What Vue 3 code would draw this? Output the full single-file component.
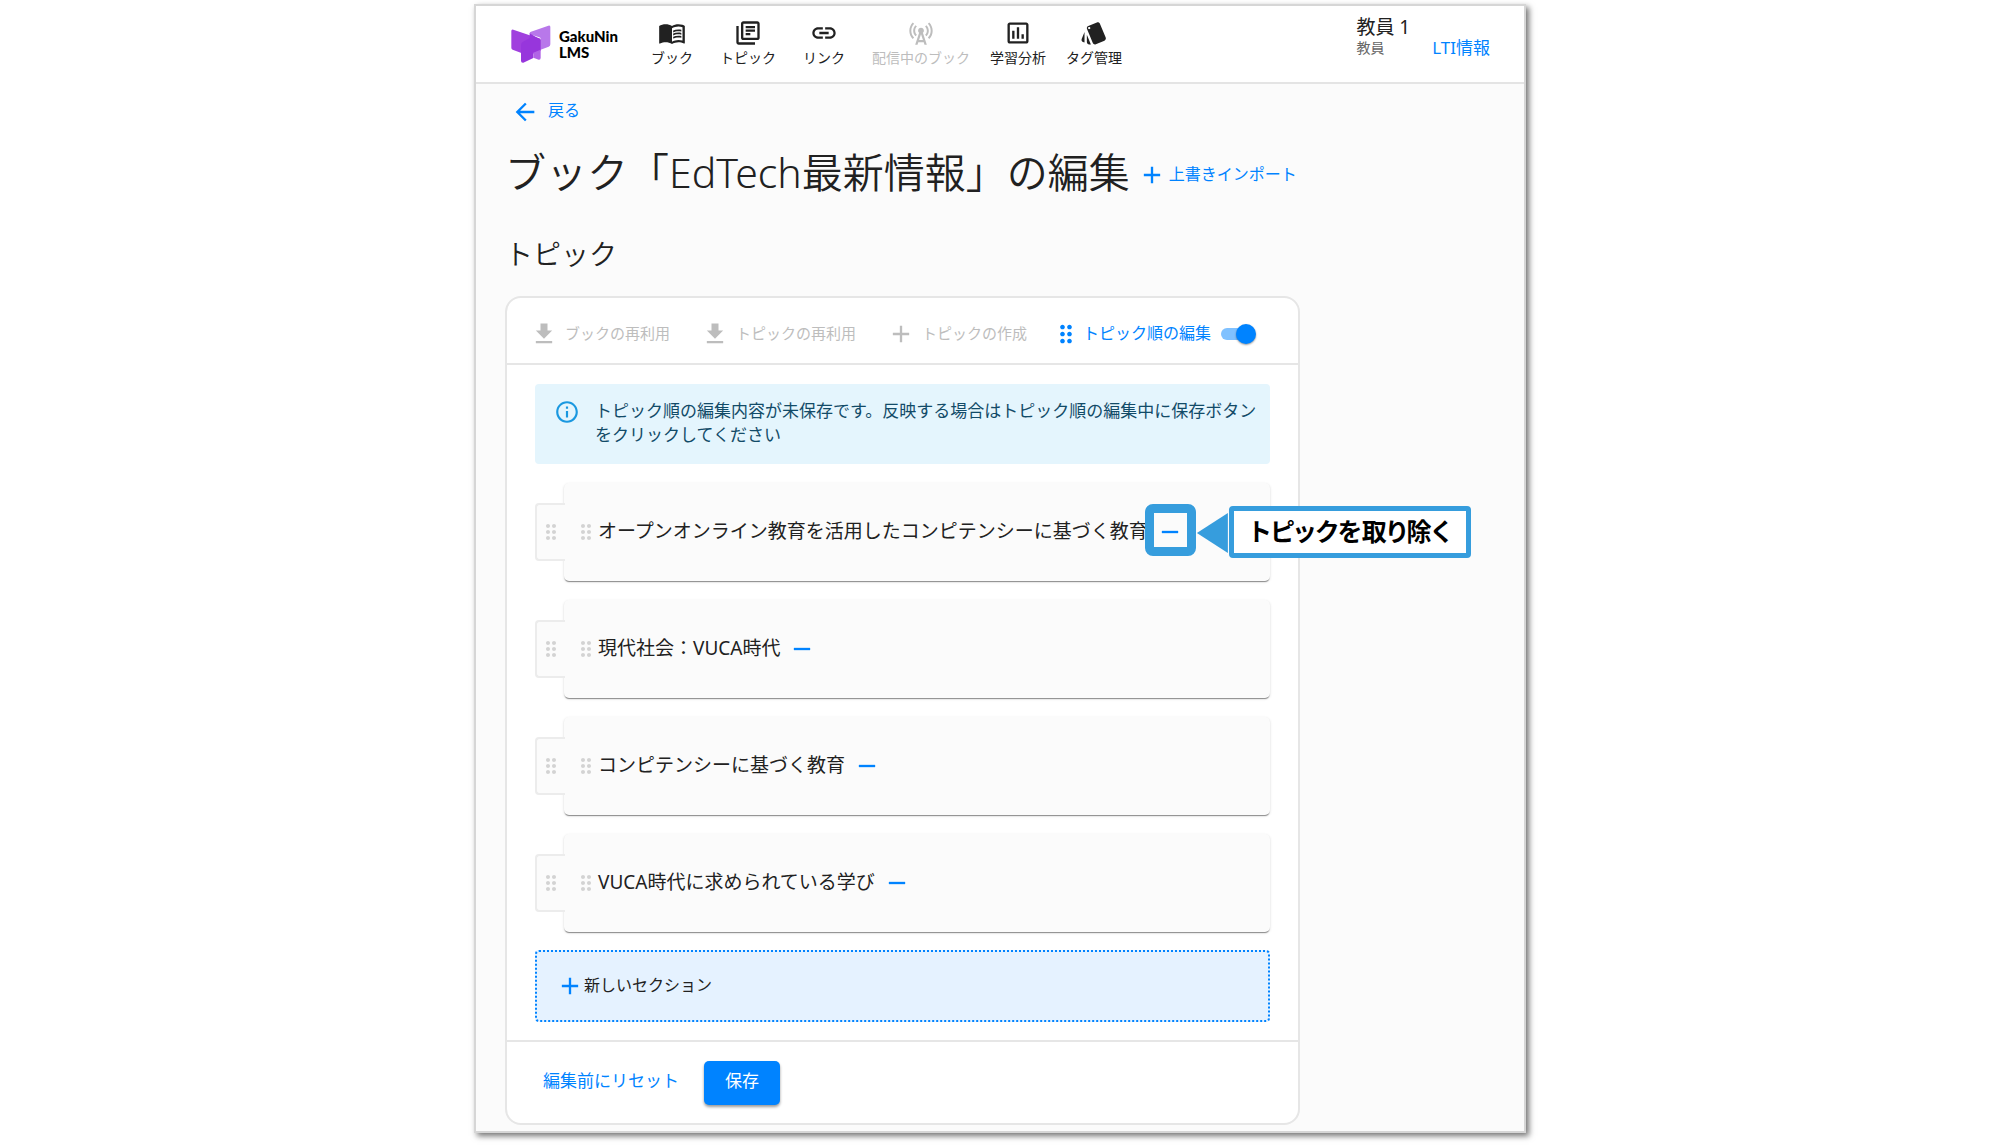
<script setup>
import { ref } from 'vue'

const icons = {
  book: 'M21 5c-1.11-.35-2.33-.5-3.5-.5-1.95 0-4.05.4-5.5 1.5-1.45-1.1-3.55-1.5-5.5-1.5S2.45 4.9 1 6v14.65c0 .25.25.5.5.5.1 0 .15-.05.25-.05C3.1 20.45 5.05 20 6.5 20c1.95 0 4.05.4 5.5 1.5 1.35-.85 3.8-1.5 5.5-1.5 1.65 0 3.35.3 4.75 1.05.1.05.15.05.25.05.25 0 .5-.25.5-.5V6c-.6-.45-1.25-.75-2-1zm0 13.5c-1.1-.35-2.3-.5-3.5-.5-1.7 0-4.15.65-5.5 1.5V8c1.35-.85 3.8-1.5 5.5-1.5 1.2 0 2.4.15 3.5.5v11.5zM17.5 10.5c.88 0 1.73.09 2.5.26V9.24c-.79-.15-1.64-.24-2.5-.24-1.7 0-3.24.29-4.5.83v1.66c1.13-.64 2.7-.99 4.5-.99zM13 12.49v1.66c1.13-.64 2.7-.99 4.5-.99.88 0 1.73.09 2.5.26V11.9c-.79-.15-1.64-.24-2.5-.24-1.7 0-3.24.3-4.5.83zM17.5 14.33c-1.7 0-3.24.29-4.5.83v1.66c1.13-.64 2.7-.99 4.5-.99.88 0 1.73.09 2.5.26v-1.52c-.79-.16-1.64-.24-2.5-.24z',
  topic: 'M4 6H2v14c0 1.1.9 2 2 2h14v-2H4V6zm16-4H8c-1.1 0-2 .9-2 2v12c0 1.1.9 2 2 2h12c1.1 0 2-.9 2-2V4c0-1.1-.9-2-2-2zm0 14H8V4h12v12zM10 9h8v2h-8zm0 3h4v2h-4zm0-6h8v2h-8z',
  link: 'M3.9 12c0-1.71 1.39-3.1 3.1-3.1h4V7H7c-2.76 0-5 2.24-5 5s2.24 5 5 5h4v-1.9H7c-1.71 0-3.1-1.39-3.1-3.1zM8 13h8v-2H8v2zm9-6h-4v1.9h4c1.71 0 3.1 1.39 3.1 3.1s-1.39 3.1-3.1 3.1h-4V17h4c2.76 0 5-2.24 5-5s-2.24-5-5-5z',
  tower: 'M7.3 14.7l1.2-1.2c-1-1-1.5-2.3-1.5-3.5 0-1.3.5-2.6 1.5-3.5L7.3 5.3c-1.3 1.3-2 3-2 4.7s.7 3.4 2 4.7zM19.1 2.9l-1.2 1.2c1.6 1.6 2.4 3.8 2.4 5.9 0 2.1-.8 4.3-2.4 5.9l1.2 1.2c2-2 2.9-4.5 2.9-7.1 0-2.6-1-5.1-2.9-7.1zM6.1 4.1L4.9 2.9C3 4.9 2 7.4 2 10c0 2.6 1 5.1 2.9 7.1l1.2-1.2c-1.6-1.6-2.4-3.8-2.4-5.9 0-2.1.8-4.3 2.4-5.9zM16.7 14.7c1.3-1.3 2-3 2-4.7-.1-1.7-.7-3.4-2-4.7l-1.2 1.2c1 1 1.5 2.3 1.5 3.5 0 1.3-.5 2.6-1.5 3.5l1.2 1.2zM14.5 10c0-1.38-1.12-2.5-2.5-2.5S9.5 8.62 9.5 10c0 .76.34 1.42.87 1.88L7 22h2l.67-2h4.67l.66 2h2l-3.37-10.12c.53-.46.87-1.12.87-1.88zm-4.17 8L12 13l1.67 5h-3.34z',
  chart: 'M9 17H7v-7h2v7zm4 0h-2V7h2v10zm4 0h-2v-4h2v4zm2 2H5V5h14v14zm0-16H5c-1.1 0-2 .9-2 2v14c0 1.1.9 2 2 2h14c1.1 0 2-.9 2-2V5c0-1.1-.9-2-2-2z',
  tag: 'M2.53 19.65l1.34.56v-9.03l-2.43 5.86c-.41 1.02.08 2.19 1.09 2.61zm19.5-3.7L17.07 3.98c-.31-.75-1.04-1.21-1.81-1.23-.26 0-.53.04-.79.15L7.1 5.95c-.75.31-1.21 1.03-1.23 1.8-.01.27.04.54.15.8l4.96 11.97c.31.76 1.05 1.22 1.83 1.23.26 0 .52-.05.77-.15l7.36-3.05c1.02-.42 1.51-1.59 1.09-2.6zM7.88 8.75c-.55 0-1-.45-1-1s.45-1 1-1 1 .45 1 1-.45 1-1 1zm-2 11c0 1.1.9 2 2 2h1.45l-3.45-8.34v6.34z',
  back: 'M20 11H7.83l5.59-5.59L12 4l-8 8 8 8 1.41-1.41L7.83 13H20v-2z',
  download: 'M19 9h-4V3H9v6H5l7 7 7-7zM5 18v2h14v-2H5z',
  add: 'M19 13h-6v6h-2v-6H5v-2h6V5h2v6h6v2z',
  remove: 'M19 13H5v-2h14v2z',
  info: 'M11 7h2v2h-2zm0 4h2v6h-2zm1-9C6.48 2 2 6.48 2 12s4.48 10 10 10 10-4.48 10-10S17.52 2 12 2zm0 18c-4.41 0-8-3.59-8-8s3.59-8 8-8 8 3.59 8 8-3.59 8-8 8z',
  drag: 'M11 18c0 1.1-.9 2-2 2s-2-.9-2-2 .9-2 2-2 2 .9 2 2zm-2-8c-1.1 0-2 .9-2 2s.9 2 2 2 2-.9 2-2-.9-2-2-2zm0-6c-1.1 0-2 .9-2 2s.9 2 2 2 2-.9 2-2-.9-2-2-2zm6 4c1.1 0 2-.9 2-2s-.9-2-2-2-2 .9-2 2 .9 2 2 2zm0 2c-1.1 0-2 .9-2 2s.9 2 2 2 2-.9 2-2-.9-2-2-2zm0 6c-1.1 0-2 .9-2 2s.9 2 2 2 2-.9 2-2-.9-2-2-2z',
}

const nav = [
  { label: 'ブック', icon: 'book' },
  { label: 'トピック', icon: 'topic' },
  { label: 'リンク', icon: 'link' },
  { label: '配信中のブック', icon: 'tower', disabled: true },
  { label: '学習分析', icon: 'chart' },
  { label: 'タグ管理', icon: 'tag' },
]

const tools = [
  { label: 'ブックの再利用', icon: 'download' },
  { label: 'トピックの再利用', icon: 'download' },
  { label: 'トピックの作成', icon: 'add' },
]

const topics = [
  'オープンオンライン教育を活用したコンピテンシーに基づく教育',
  '現代社会：VUCA時代',
  'コンピテンシーに基づく教育',
  'VUCA時代に求められている学び',
]

const sorting = ref(true)
</script>

<template>
  <div class="window" lang="ja">
    <header class="appbar">
      <a class="brand" href="#">
        <svg class="brand-mark" viewBox="122 74 120 114" aria-hidden="true">
          <path d="M178 99q0-4 4-5l52-18q6-2 6 4v52q0 5-5 7l-24 9v-32q0-4-4-5l-29-9z" fill="#b878ea" />
          <path d="M129 88l49 17 29 9q4 1 4 5v32l-22 9-36 0v-2l-26-10q-4-2-4-6V92q0-6 6-4z" fill="#a040de" />
          <path d="M152 134q0-7 6-10l20-11v-14l33 19v30l-22 9v16l-30 14q-7 1-7-6z" fill="#9736dc" />
          <path d="M189 157l22-9v24q0 7-6 6l-16-6z" fill="#b163e6" />
        </svg>
        <span class="brand-name">GakuNin<br />LMS</span>
      </a>
      <nav class="nav">
        <button v-for="n in nav" :key="n.label" class="nav-item" :disabled="n.disabled">
          <svg class="icon" viewBox="0 0 24 24" aria-hidden="true"><path :d="icons[n.icon]" /></svg>
          <span>{{ n.label }}</span>
        </button>
      </nav>
      <div class="user">
        <div class="user-id">
          <span class="user-name">教員 1</span>
          <span class="user-role">教員</span>
        </div>
        <button class="lti">LTI情報</button>
      </div>
    </header>

    <main class="main">
      <a class="back" href="#">
        <svg class="icon" viewBox="0 0 24 24" aria-hidden="true"><path :d="icons.back" /></svg>
        <span class="label">戻る</span>
      </a>
      <div class="heading">
        <h1>ブック「EdTech最新情報」の編集</h1>
        <button class="import">
          <svg class="icon" viewBox="0 0 24 24" aria-hidden="true"><path :d="icons.add" /></svg>
          <span class="label">上書きインポート</span>
        </button>
      </div>
      <h2>トピック</h2>

      <section class="card">
        <div class="toolbar">
          <button v-for="t in tools" :key="t.label" class="tool" disabled>
            <svg class="icon" viewBox="0 0 24 24" aria-hidden="true"><path :d="icons[t.icon]" /></svg>
            <span class="label">{{ t.label }}</span>
          </button>
          <label class="sort">
            <svg class="icon" viewBox="0 0 24 24" aria-hidden="true"><path :d="icons.drag" /></svg>
            <span class="label">トピック順の編集</span>
            <input v-model="sorting" class="switch" type="checkbox" role="switch" />
          </label>
        </div>

        <div class="content">
          <div class="alert" role="alert">
            <svg class="alert-icon" viewBox="0 0 24 24" aria-hidden="true"><path :d="icons.info" /></svg>
            <p>トピック順の編集内容が未保存です。反映する場合はトピック順の編集中に保存ボタンをクリックしてください</p>
          </div>

          <ul class="sections">
            <li v-for="(topic, i) in topics" :key="topic" class="section">
              <button class="handle" aria-label="セクションを移動">
                <svg class="drag" viewBox="0 0 24 24" aria-hidden="true"><path :d="icons.drag" /></svg>
              </button>
              <div class="topic">
                <svg class="drag" viewBox="0 0 24 24" aria-hidden="true"><path :d="icons.drag" /></svg>
                <span class="topic-name">{{ topic }}</span>
                <div class="remove-slot">
                  <button class="remove" aria-label="トピックを取り除く">
                    <svg class="icon" viewBox="0 0 24 24" aria-hidden="true"><path :d="icons.remove" /></svg>
                  </button>
                  <div v-if="i === 0" class="guide">
                    <span class="guide-ring"></span>
                    <span class="guide-arrow"></span>
                    <strong class="guide-label">トピックを取り除く</strong>
                  </div>
                </div>
              </div>
            </li>
          </ul>

          <button class="new-section">
            <svg class="icon" viewBox="0 0 24 24" aria-hidden="true"><path :d="icons.add" /></svg>
            <span class="label">新しいセクション</span>
          </button>
        </div>

        <div class="actions">
          <button class="reset"><span class="label">編集前にリセット</span></button>
          <button class="save"><span class="label">保存</span></button>
        </div>
      </section>
    </main>
  </div>
</template>

<style>
body {
  background: #fff;
}
</style>

<style scoped>
.window {
  box-sizing: border-box;
  max-width: 1052px;
  margin: 4px auto 12px;
  border: 2px solid #d6d6d6;
  background: #fbfbfb;
  box-shadow: 3px 3px 6px rgba(0, 0, 0, 0.55);
  color: #212121;
  font-family: 'Noto Sans', 'Noto Sans CJK JP', sans-serif;
  font-size: 16px;
}

button {
  margin: 0;
  padding: 0;
  border: 0;
  background: none;
  color: inherit;
  font: inherit;
  cursor: pointer;
}

a {
  color: inherit;
  text-decoration: none;
}

.icon {
  flex: none;
  display: block;
  width: 28px;
  height: 28px;
  fill: currentColor;
}

.label {
  display: block;
  padding-bottom: 4px;
}

.appbar {
  display: flex;
  height: 76px;
  border-bottom: 2px solid #e4e4e4;
  background: #fff;
}

.brand {
  display: flex;
  align-items: center;
  gap: 8px;
  width: 123px;
  padding: 0 0 0 35px;
  color: #000;
}

.brand-mark {
  width: 40px;
  height: 38px;
}

.brand-name {
  font: 900 15px/16px Lato, sans-serif;
}

.nav {
  display: flex;
  align-items: flex-start;
  padding-top: 13px;
}

.nav-item {
  display: flex;
  flex-direction: column;
  align-items: center;
  min-width: 76px;
  padding: 0 10px;
  font-size: 14px;
  line-height: 22px;
}

.nav-item:disabled {
  color: #bdbdbd;
}

.user {
  display: flex;
  align-items: flex-start;
  gap: 22px;
  margin-left: auto;
  padding: 8px 34px 0 0;
}

.user-id {
  display: flex;
  flex-direction: column;
}

.user-name {
  font-size: 19px;
  line-height: 26px;
}

.user-role {
  color: #666;
  font-size: 14px;
  line-height: 16px;
}

.lti {
  margin-top: 22px;
  color: #0083ff;
  font-size: 17px;
  line-height: 24px;
}

.main {
  padding: 14px 29px 6px;
}

.back {
  display: flex;
  align-items: center;
  gap: 9px;
  width: max-content;
  padding-left: 6px;
  color: #0083ff;
  line-height: 24px;
}

.heading {
  display: flex;
  align-items: center;
  gap: 8px;
  margin-top: 18px;
}

h1 {
  margin: 0;
  font-size: 41px;
  font-weight: 350;
  line-height: 56px;
}

.import {
  display: flex;
  align-items: center;
  gap: 3px;
  padding-top: 6px;
  color: #0083ff;
}

h2 {
  margin: 34px 0 22px;
  font-size: 28px;
  font-weight: 350;
  line-height: 40px;
}

.card {
  box-sizing: border-box;
  max-width: 795px;
  border: 2px solid #e6e6e6;
  border-radius: 16px;
  background: #fff;
}

.toolbar {
  display: flex;
  align-items: center;
  height: 58px;
  padding: 7px 23px 0;
  border-bottom: 2px solid #e6e6e6;
}

.tool {
  display: flex;
  align-items: center;
  gap: 7px;
  margin-right: 31px;
  color: #bdbdbd;
  font-size: 15px;
}

.sort {
  display: flex;
  align-items: center;
  gap: 3px;
  margin-left: -6px;
  color: #0083ff;
}

.switch {
  appearance: none;
  position: relative;
  width: 36px;
  height: 20px;
  margin: 0 0 0 7px;
}

.switch::before {
  content: '';
  position: absolute;
  top: 4px;
  left: 0;
  width: 30px;
  height: 12px;
  border-radius: 6px;
  background: #9e9e9e;
}

.switch::after {
  content: '';
  position: absolute;
  top: 0;
  left: 0;
  width: 20px;
  height: 20px;
  border-radius: 50%;
  background: #fff;
  box-shadow: 0 1px 2px rgba(0, 0, 0, 0.4);
}

.switch:checked::before {
  background: #80c1ff;
}

.switch:checked::after {
  left: 15px;
  background: #0083ff;
}

.content {
  padding: 19px 28px 18px;
}

.alert {
  display: flex;
  gap: 15px;
  padding: 15px 8px 17px 19px;
  border-radius: 4px;
  background: #e4f5fd;
  color: #124b68;
  font-size: 17px;
  line-height: 24px;
}

.alert-icon {
  flex: none;
  width: 26px;
  height: 26px;
  fill: #1a98e0;
}

.alert p {
  margin: 0;
}

.sections {
  display: flex;
  flex-direction: column;
  gap: 19px;
  margin: 19px 0 18px;
  padding: 0;
  list-style: none;
}

.section {
  display: flex;
  align-items: center;
}

.handle {
  z-index: 1;
  display: flex;
  align-items: center;
  justify-content: center;
  box-sizing: border-box;
  width: 30px;
  height: 58px;
  margin-right: -1px;
  border: 2px solid #ececec;
  border-right: 0;
  border-radius: 4px 0 0 4px;
  background: #fbfbfb;
}

.drag {
  flex: none;
  width: 24px;
  height: 24px;
  fill: #d3d3d3;
}

.topic {
  flex: 1;
  display: flex;
  align-items: center;
  height: 98px;
  padding-left: 10px;
  border-radius: 5px;
  background: #fbfbfb;
  box-shadow: 0 2px 1px -1px rgba(0, 0, 0, 0.3), 0 1px 1px rgba(0, 0, 0, 0.14), 0 1px 3px rgba(0, 0, 0, 0.12);
}

.topic-name {
  padding-bottom: 2px;
  font-size: 19px;
  line-height: 28px;
  white-space: nowrap;
}

.remove-slot {
  position: relative;
  margin-left: 8px;
}

.remove {
  display: block;
  color: #0083ff;
}

.guide {
  position: absolute;
  top: -16px;
  left: -11px;
  display: flex;
  align-items: center;
  pointer-events: none;
}

.guide-ring {
  box-sizing: border-box;
  width: 51px;
  height: 52px;
  border: 9px solid #369ddd;
  border-radius: 8px;
}

.guide-arrow {
  width: 31px;
  height: 40px;
  margin: 6px 1px 0;
  background: #369ddd;
  clip-path: polygon(100% 0, 100% 100%, 0 50%);
}

.guide-label {
  box-sizing: border-box;
  width: 242px;
  height: 52px;
  margin-top: 4px;
  border: 5px solid #369ddd;
  border-radius: 4px;
  background: #fff;
  color: #000;
  font-size: 25px;
  font-feature-settings: 'palt';
  line-height: 40px;
  text-align: center;
  white-space: nowrap;
}

.new-section {
  display: flex;
  align-items: center;
  box-sizing: border-box;
  width: 100%;
  height: 72px;
  padding-left: 19px;
  border: 2px dotted #0083ff;
  border-radius: 4px;
  background: #e5f2ff;
}

.new-section .icon {
  color: #0083ff;
}

.actions {
  display: flex;
  align-items: center;
  gap: 25px;
  padding: 19px 36px 18px;
  border-top: 2px solid #e6e6e6;
  font-size: 17px;
}

.reset {
  padding-bottom: 4px;
  color: #0083ff;
}

.save {
  width: 76px;
  height: 44px;
  padding-bottom: 4px;
  border-radius: 5px;
  background: #0083ff;
  box-shadow: 0 2px 3px rgba(0, 0, 0, 0.4);
  color: #fff;
}
</style>
